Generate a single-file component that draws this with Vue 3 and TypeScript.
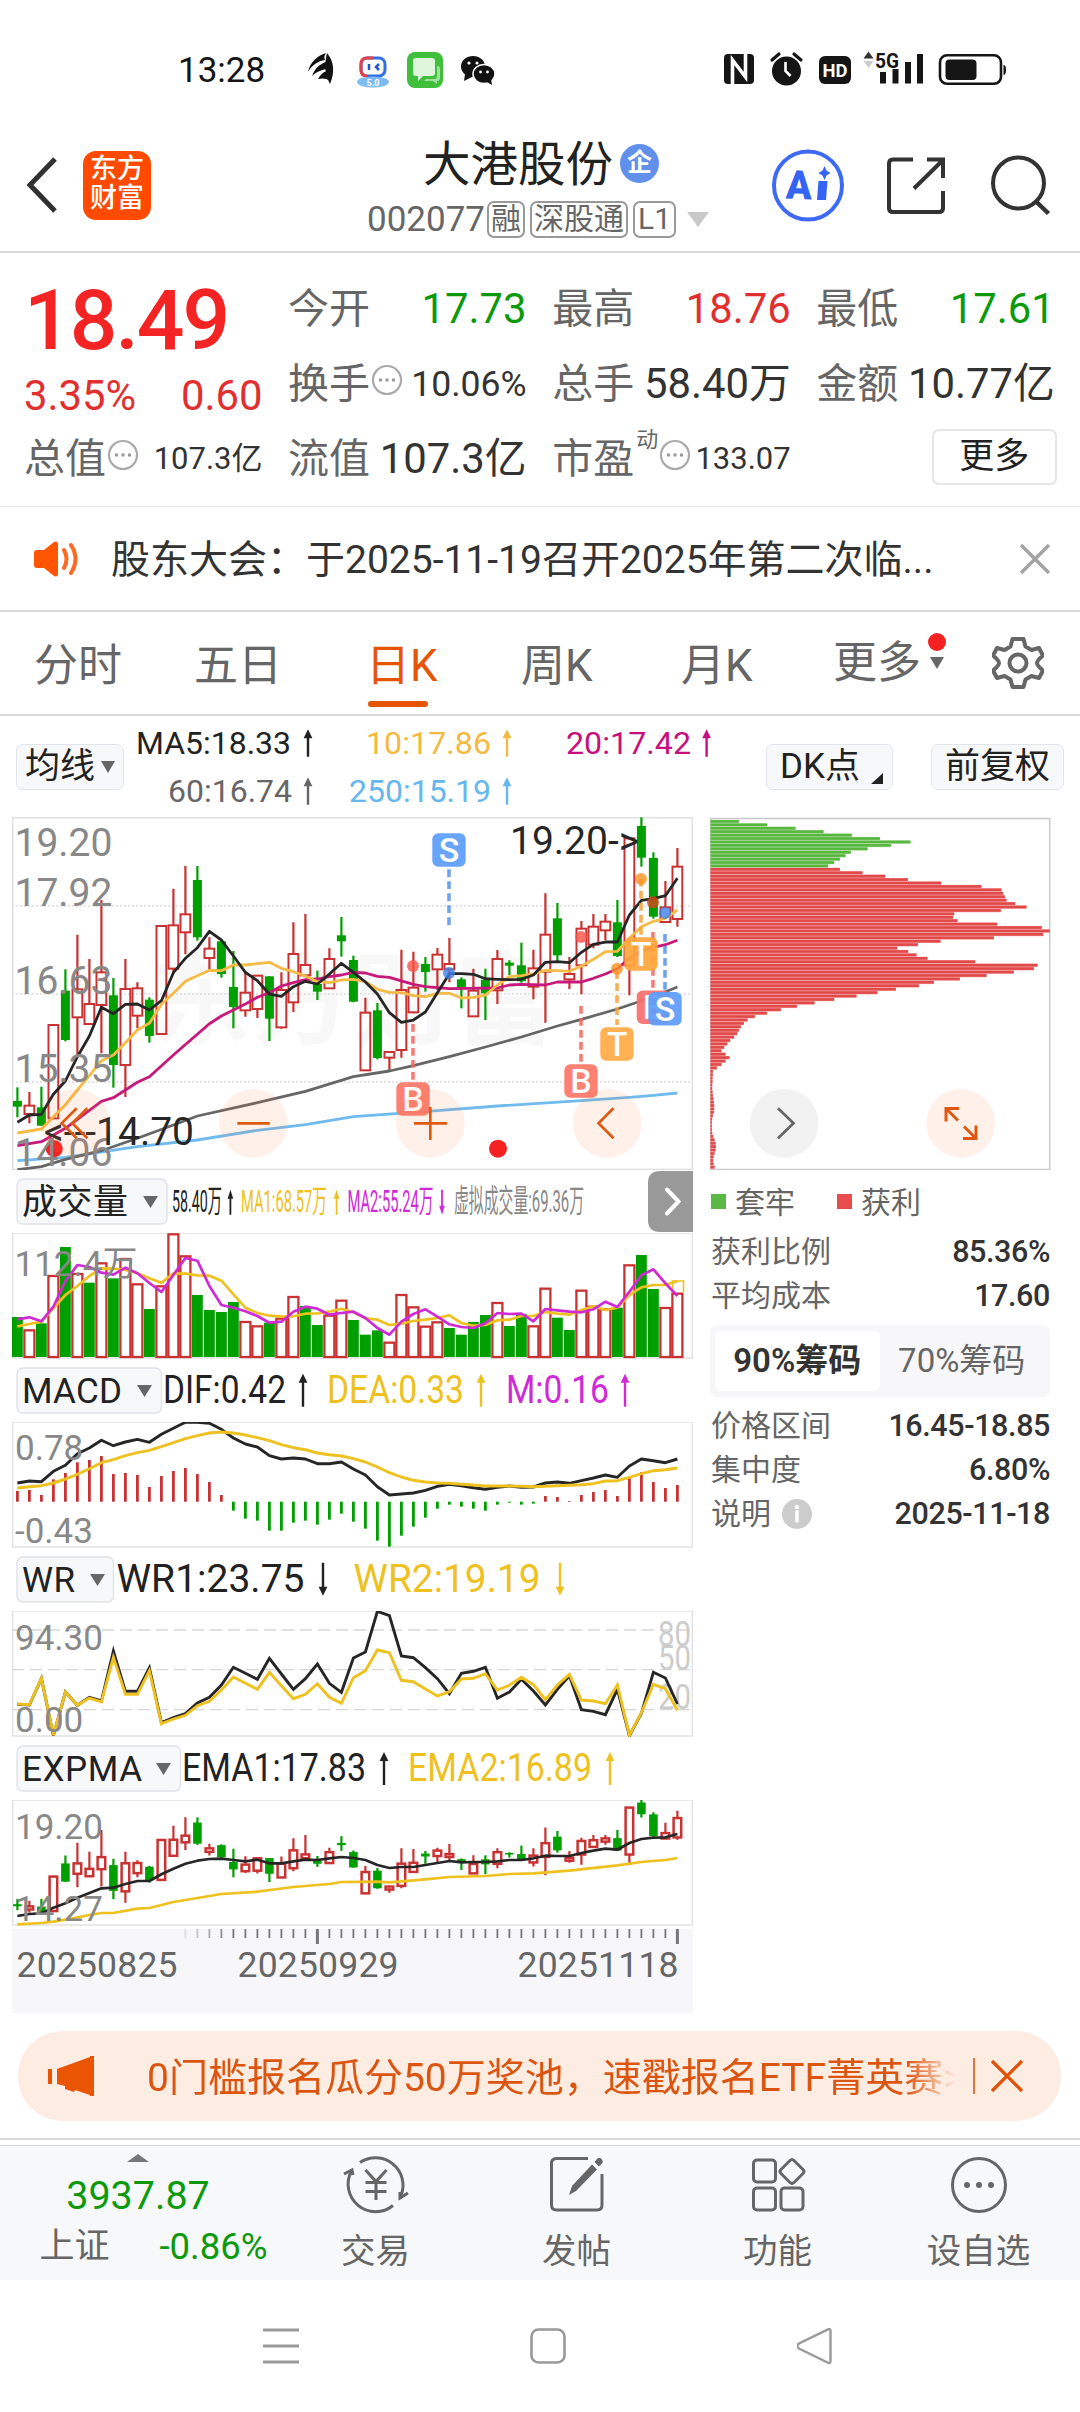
<script setup lang="ts">
type Candle = [number, number, number, number, number]

interface Label { text: string; x: number; w: number; color: string; arrow?: number; up?: boolean }
interface SubPanel {
  name: string
  btn: number
  nameW: number
  tri: number
  size: number
  base: number
  top: number
  labels: Label[]
}

const STEP = 12
const X0 = 17.4
const px = (i: number): number => X0 + STEP * i

const RED = '#c83232'
const GREEN = '#009f00'

// high, body top, body bottom, low, rising flag
const candles: Candle[] = [
  [832, 873, 890, 922, 0], [846, 887, 912, 940, 1], [830, 892, 947, 947, 0], [642, 645, 925, 928, 1],
  [478, 542, 690, 694, 0], [374, 538, 622, 735, 1], [447, 582, 642, 642, 1], [270, 487, 585, 730, 1],
  [504, 556, 765, 833, 0], [447, 537, 765, 861, 1], [517, 535, 617, 655, 1], [562, 569, 678, 698, 0],
  [348, 348, 672, 672, 1], [236, 346, 476, 490, 1], [168, 313, 367, 433, 1], [168, 210, 382, 392, 0],
  [382, 416, 444, 478, 1], [387, 394, 492, 503, 0], [423, 531, 591, 655, 0], [485, 548, 601, 620, 1],
  [497, 497, 597, 624, 1], [499, 499, 626, 693, 0], [487, 540, 652, 656, 1], [337, 432, 577, 606, 1],
  [312, 465, 496, 500, 1], [482, 522, 545, 570, 0], [415, 447, 535, 537, 1], [321, 376, 394, 440, 0],
  [437, 450, 575, 577, 0], [563, 608, 781, 783, 1], [579, 601, 744, 748, 0], [724, 726, 743, 781, 1],
  [419, 540, 720, 743, 1], [425, 533, 607, 610, 1], [441, 462, 486, 545, 0], [414, 434, 478, 540, 1],
  [384, 462, 478, 517, 1], [502, 508, 535, 595, 0], [476, 542, 619, 621, 1], [476, 509, 550, 630, 0],
  [420, 447, 541, 582, 1], [451, 458, 467, 495, 0], [398, 466, 514, 518, 0], [419, 475, 530, 568, 1],
  [250, 374, 485, 638, 1], [279, 325, 436, 455, 0], [441, 492, 508, 537, 1], [333, 356, 466, 553, 1],
  [312, 350, 404, 415, 1], [312, 335, 361, 391, 1], [270, 337, 438, 441, 0], [85, 85, 466, 556, 1],
  [22, 48, 143, 170, 0], [127, 144, 320, 326, 0], [213, 292, 336, 338, 1], [114, 170, 327, 350, 1],
]

const ma5 = [937, 915, 913, 853, 813, 740, 678, 592, 611, 583, 582, 600, 572, 488, 445, 413, 364, 390, 438, 487, 512, 552, 559, 530, 514, 522, 492, 460, 487, 516, 552, 608, 637, 630, 606, 548, 491, 491, 493, 506, 508, 509, 508, 495, 457, 455, 458, 427, 403, 396, 396, 315, 271, 266, 257, 205]
const ma10 = [969, 963, 957, 920, 884, 840, 797, 752, 735, 698, 660, 640, 583, 550, 514, 497, 481, 482, 465, 465, 461, 457, 475, 485, 498, 515, 518, 510, 508, 515, 538, 547, 548, 557, 560, 550, 550, 564, 562, 555, 525, 500, 497, 492, 481, 482, 484, 468, 448, 425, 424, 385, 350, 334, 325, 300]
const ma20: [number, number][] = [[0, 1007], [2, 995], [4, 955], [7, 874], [8, 863], [9, 840], [10, 817], [11, 800], [13, 735], [16, 641], [17, 618], [18, 600], [19, 582], [20, 562], [21, 548], [22, 528], [23, 518], [24, 509], [25, 507], [26, 500], [27, 495], [28, 487], [29, 489], [30, 499], [31, 502], [33, 523], [34, 530], [36, 536], [40, 534], [41, 525], [42, 523], [44, 525], [45, 516], [47, 516], [48, 505], [49, 492], [50, 476], [51, 445], [52, 424], [53, 412], [54, 404], [55, 391]]
const ma60: [number, number][] = [[0, 1079], [2, 1070], [4, 1048], [7, 1022], [10, 985], [13, 945], [15, 918], [20, 878], [24, 844], [28, 800], [31, 783], [33, 767], [36, 740], [39, 711], [42, 681], [45, 648], [47, 628], [50, 597], [53, 560], [55, 531]]
const ma250: [number, number][] = [[0, 1052], [4, 1042], [10, 1010], [15, 990], [20, 961], [24, 944], [28, 920], [35, 902], [40, 888], [47, 872], [51, 862], [53, 856], [55, 849]]

const volume = [441, 478, 460, 315, 231, 309, 338, 277, 325, 264, 340, 417, 346, 190, 256, 375, 420, 426, 396, 453, 466, 458, 443, 378, 408, 465, 434, 389, 450, 494, 481, 515, 372, 409, 467, 454, 474, 494, 456, 435, 396, 468, 432, 466, 353, 443, 480, 359, 407, 415, 413, 283, 255, 357, 411, 368]
const volumeUp = '01010101011011100001101100110001111100001001100111010011'
const volMa1 = [469, 462, 455, 415, 375, 348, 318, 295, 296, 300, 310, 325, 338, 310, 311, 316, 317, 332, 373, 413, 429, 437, 440, 439, 431, 430, 425, 416, 427, 445, 449, 465, 461, 453, 449, 444, 436, 459, 467, 465, 451, 449, 438, 438, 426, 431, 434, 420, 409, 420, 413, 375, 352, 345, 345, 333]
const volMa2 = [448, 442, 454, 410, 333, 285, 291, 308, 314, 293, 310, 339, 366, 315, 264, 272, 348, 405, 413, 424, 438, 458, 455, 425, 410, 416, 434, 429, 425, 444, 474, 494, 455, 432, 418, 440, 463, 471, 474, 460, 429, 432, 431, 454, 417, 421, 425, 427, 418, 395, 411, 365, 316, 298, 340, 378]

const macd = [363, 360, 375, 328, 309, 277, 270, 258, 312, 309, 315, 351, 318, 303, 294, 312, 336, 375, 422, 446, 452, 482, 482, 458, 452, 464, 449, 431, 455, 476, 512, 530, 497, 470, 443, 416, 404, 410, 416, 422, 404, 398, 404, 401, 378, 381, 393, 375, 366, 360, 378, 324, 306, 336, 354, 345]
const dif = [339, 333, 335, 304, 286, 251, 234, 211, 227, 216, 208, 217, 193, 175, 157, 157, 160, 178, 204, 222, 231, 257, 267, 264, 267, 281, 281, 276, 297, 315, 350, 375, 372, 369, 361, 349, 343, 347, 353, 358, 352, 348, 352, 351, 339, 336, 340, 332, 324, 315, 322, 288, 267, 272, 278, 267]
const dea = [354, 350, 347, 339, 327, 313, 296, 278, 269, 257, 248, 241, 230, 218, 206, 197, 189, 186, 189, 195, 203, 212, 224, 233, 239, 249, 254, 258, 266, 276, 291, 308, 321, 331, 336, 339, 340, 343, 345, 348, 348, 348, 349, 350, 349, 347, 346, 344, 341, 333, 332, 322, 311, 302, 299, 294]

const wr1 = [463, 465, 385, 557, 426, 466, 442, 453, 303, 424, 424, 353, 518, 503, 491, 459, 442, 405, 352, 370, 388, 325, 372, 418, 386, 342, 400, 427, 324, 306, 184, 197, 318, 323, 353, 386, 431, 370, 364, 352, 445, 426, 388, 423, 465, 418, 377, 479, 484, 494, 418, 557, 490, 367, 384, 462]
const wr2 = [462, 464, 385, 556, 426, 466, 444, 456, 322, 433, 433, 362, 521, 507, 496, 467, 454, 420, 381, 400, 418, 367, 407, 446, 433, 401, 442, 460, 383, 362, 300, 308, 391, 395, 417, 438, 425, 387, 385, 371, 420, 406, 382, 404, 449, 405, 373, 450, 453, 461, 405, 556, 488, 403, 416, 481]

const ema1 = [528, 522, 520, 503, 490, 473, 459, 445, 443, 432, 423, 423, 403, 386, 371, 362, 357, 356, 360, 364, 359, 370, 370, 364, 359, 360, 355, 351, 354, 360, 375, 384, 381, 381, 375, 369, 363, 367, 366, 366, 364, 360, 360, 355, 347, 348, 348, 339, 332, 326, 329, 309, 297, 293, 292, 282]
const ema2: [number, number][] = [[0, 553], [2, 549], [3, 545], [4, 539], [6, 525], [7, 519], [8, 519], [10, 506], [11, 504], [13, 486], [15, 474], [17, 462], [20, 455], [23, 441], [26, 432], [27, 426], [30, 425], [31, 427], [34, 418], [36, 411], [39, 408], [41, 402], [43, 400], [46, 392], [50, 376], [52, 366], [54, 360], [55, 354]]

const chips = [147, 232, 317, 401, 486, 570, 662, 603, 533, 483, 467, 450, 433, 415, 450, 518, 586, 654, 754, 875, 935, 940, 945, 950, 976, 1010, 933, 793, 790, 803, 922, 1056, 1080, 1060, 912, 752, 684, 622, 655, 680, 713, 856, 1043, 1032, 972, 890, 810, 732, 687, 618, 563, 500, 433, 374, 321, 273, 231, 195, 173, 162, 153, 147, 142, 133, 121, 112, 103, 95, 107, 119, 107, 95, 81, 69, 69, 68, 68, 67, 67, 68, 69, 71, 72, 73, 73, 72, 69, 67, 66, 66, 66, 67, 70, 74, 77, 78, 77, 74, 71, 70, 71, 74]

function dense(values: number[], base: number): string {
  return values.map((v, i) => `${px(i).toFixed(1)},${(base + v / 3).toFixed(1)}`).join(' ')
}
function sparse(values: [number, number][], base: number): string {
  return values.map(([i, v]) => `${px(i).toFixed(1)},${(base + v / 3).toFixed(1)}`).join(' ')
}
function arrow(x: number, top: number, bottom: number, up: boolean, head = 4.4, half = 1.2): string {
  const y0 = up ? top : bottom
  const y1 = up ? top + 9 : bottom - 9
  const y2 = up ? bottom : top
  return `M${x} ${y0}L${x + head} ${y1}H${x + half}V${y2}H${x - half}V${y1}H${x - head}Z`
}

const mainCandles = candles.map(([h, t, b, l, up], i) => ({
  x: px(i), h: 810 + h / 3, t: 810 + t / 3, b: 810 + b / 3, l: 810 + l / 3, up: up === 1,
}))
const emaY = (v: number): number => 1740 + (178 + (v - 22) * 0.3696) / 3
const emaCandles = candles.map(([h, t, b, l, up], i) => ({
  x: px(i), h: emaY(h), t: emaY(t), b: emaY(b), l: emaY(l), up: up === 1,
}))
const volBars = volume.map((v, i) => ({ x: px(i), y: 1170 + v / 3, up: volumeUp[i] === '1' }))
const ticks = Array.from({ length: 42 }, (_, k) => k + 14)

const stats = [
  { label: '今开', value: '17.73', cls: 'down' },
  { label: '最高', value: '18.76', cls: 'up' },
  { label: '最低', value: '17.61', cls: 'down' },
]
const axisLabels = [
  { t: '19.20', y: 855.7 }, { t: '17.92', y: 906 }, { t: '16.63', y: 994 }, { t: '15.35', y: 1082 }, { t: '14.06', y: 1165.7 },
]
const maLabels = [
  { t: 'MA5:18.33', x: 136, w: 155, a: 308, y: 754.3, c: '#222222' },
  { t: '10:17.86', x: 366, w: 125, a: 507, y: 754.3, c: '#f5b942' },
  { t: '20:17.42', x: 566, w: 125, a: 706.6, y: 754.3, c: '#c7107e' },
  { t: '60:16.74', x: 168, w: 124, a: 308, y: 802.3, c: '#666666' },
  { t: '250:15.19', x: 349, w: 142, a: 507, y: 802.3, c: '#66b7ee' },
]
const Y = '#eec11f'
const P = '#cf2ad6'
const panels: SubPanel[] = [
  { name: '成交量', btn: 150, nameW: 106, tri: 143, size: 31.5, base: 1211.7, top: 1170, labels: [
    { text: '58.40万', x: 172, w: 50, color: '#222', arrow: 230.4, up: true },
    { text: 'MA1:68.57万', x: 241, w: 86, color: Y, arrow: 336.6, up: true },
    { text: 'MA2:55.24万', x: 347.5, w: 86, color: P, arrow: 442, up: false },
    { text: '虚拟成交量:69.36万', x: 454, w: 130, color: '#888' } ] },
  { name: 'MACD', btn: 144.5, nameW: 100, tri: 137, size: 39, base: 1402.7, top: 1359, labels: [
    { text: 'DIF:0.42', x: 163, w: 123, color: '#222', arrow: 303, up: true },
    { text: 'DEA:0.33', x: 327, w: 137, color: Y, arrow: 481, up: true },
    { text: 'M:0.16', x: 506, w: 103, color: P, arrow: 625, up: true } ] },
  { name: 'WR', btn: 96.5, nameW: 53, tri: 90, size: 39, base: 1591.8, top: 1548, labels: [
    { text: 'WR1:23.75', x: 116.5, w: 188, color: '#222', arrow: 323, up: false },
    { text: 'WR2:19.19', x: 353.5, w: 187, color: Y, arrow: 560, up: false } ] },
  { name: 'EXPMA', btn: 163.5, nameW: 120, tri: 156, size: 39, base: 1781, top: 1737, labels: [
    { text: 'EMA1:17.83', x: 182, w: 184, color: '#222', arrow: 384, up: true },
    { text: 'EMA2:16.89', x: 408, w: 184, color: Y, arrow: 610, up: true } ] },
]

const tags = [
  { t: 'S', x: 432.3, y: 833.3, c: '#5c9efa' },
  { t: 'B', x: 396.3, y: 1082.3, c: '#fd7767' },
  { t: 'B', x: 564.3, y: 1064.3, c: '#fd7767' },
  { t: 'T', x: 600.3, y: 1027.3, c: '#ffab46' },
  { t: 'T', x: 624.3, y: 937.3, c: '#ffa63c' },
  { t: 'B', x: 636.7, y: 990.5, c: '#f7706c' },
  { t: 'S', x: 648.3, y: 992, c: '#5c9efa' },
]
const guides = [
  { x: 449, a: 869.3, b: 925, c: '#5794ee' },
  { x: 413, a: 1024, b: 1080, c: '#f4675c' },
  { x: 581, a: 1006, b: 1062, c: '#f4675c' },
  { x: 617, a: 971.3, b: 1025, c: '#f7a233' },
  { x: 641, a: 879, b: 935, c: '#f7a233' },
  { x: 653, a: 932, b: 988, c: '#f4675c' },
  { x: 665, a: 934, b: 990, c: '#5794ee' },
]
const dots = [
  { x: 449, y: 973, c: '#3f82ea' }, { x: 413, y: 966, c: '#fa5348' }, { x: 581, y: 937, c: '#fa5348' },
  { x: 617, y: 968.7, c: '#fb9420' }, { x: 641, y: 879, c: '#fb9420' }, { x: 653, y: 902.3, c: '#d4471c' }, { x: 665, y: 913, c: '#3f82ea' },
]
</script>

<template>
  <div class="page">
    <div class="status">
      <span class="clock">13:28</span>
      <svg class="sys-left" width="194" height="44" viewBox="304 48 194 44">
        <path d="M308 72c2-10 9-16 18-19-2 3-2 5-1 7-7 1-13 5-17 12zM312 76c3-8 8-12 14-14-1 3-1 5 0 7-5 1-10 3-14 7zM318 79c2-4 5-7 9-8 0 3 1 6 3 10-4-3-8-3-12-2zM327 53c7 8 8 19 3 31-5-9-6-19-3-31z" fill="#111" />
        <rect x="361" y="58" width="24" height="18" rx="6" fill="#fff" stroke="#2f6fe8" stroke-width="3" />
        <path d="M373 58h-6q-6 0-6 6v6q0 6 6 6" fill="none" stroke="#e2404a" stroke-width="3" />
        <path d="M369 64v6M379 64l-3 3 3 3" fill="none" stroke="#2456c8" stroke-width="2.500" />
        <ellipse cx="373" cy="82" rx="16" ry="5.500" fill="#7dbcf0" />
        <text x="373" y="86" font-size="9" font-weight="700" fill="#fff" text-anchor="middle">5.0</text>
        <rect x="407" y="52" width="36" height="36" rx="8" fill="#3fbf3b" />
        <path d="M416 58h16q3 0 3 3v12q0 3-3 3h-9l-5 5v-5h-2q-3 0-3-3V61q0-3 3-3z" fill="#dff6dc" />
        <path d="M437 66v10q0 3-3 3h-8l-2 2h9l4 3v-3q3 0 3-3V69q0-3-3-3z" fill="#9fe09b" />
        <ellipse cx="473" cy="66.500" rx="12" ry="10.500" fill="#111" /><path d="M465 74l-1 7 8-4z" fill="#111" />
        <ellipse cx="484" cy="74" rx="11" ry="9.500" fill="#111" stroke="#fff" stroke-width="1.500" /><path d="M487 82l5 3-1-6z" fill="#111" />
        <circle cx="469" cy="63" r="1.600" fill="#fff" /><circle cx="477" cy="63" r="1.600" fill="#fff" />
        <circle cx="480.500" cy="72" r="1.400" fill="#fff" /><circle cx="487.500" cy="72" r="1.400" fill="#fff" />
      </svg>
      <svg class="sys-right" width="290" height="44" viewBox="720 48 290 44">
        <rect x="724" y="54" width="30" height="30" rx="4" fill="#151515" />
        <path d="M732.500 84V60l13 17V54" fill="none" stroke="#fff" stroke-width="3.600" />
        <circle cx="786.500" cy="71" r="14.500" fill="#151515" /><path d="M772 60l7-6M801 60l-7-6" stroke="#151515" stroke-width="3.200" stroke-linecap="round" />
        <path d="M785.500 62v9l5 5" fill="none" stroke="#fff" stroke-width="2.600" />
        <rect x="819" y="56" width="32" height="28" rx="6" fill="#151515" />
        <text x="835" y="77" font-size="18.500" font-weight="700" fill="#fff" text-anchor="middle" textLength="25" lengthAdjust="spacingAndGlyphs">HD</text>
        <path d="M863.500 58.500l5-7 5 7z" fill="#333" /><path d="M863.500 61l5 7 5-7z" fill="#ccc" />
        <text x="875" y="67.500" font-size="20" font-weight="700" fill="#151515" textLength="24" lengthAdjust="spacingAndGlyphs">5G</text>
        <path d="M880 72h6v11.500h-6zM892.500 69h6v14.500h-6zM905 62h6v21.500h-6zM917 54h6v29.500h-6z" fill="#151515" />
        <rect x="940" y="55.300" width="61" height="28.500" rx="7" fill="none" stroke="#151515" stroke-width="2.600" />
        <rect x="945.500" y="59.500" width="31" height="20.500" rx="4" fill="#151515" /><path d="M1003.500 65q2.500 0 2.500 5t-2.500 5z" fill="#151515" />
      </svg>
    </div>

    <header class="head">
      <div class="head-left">
        <svg width="36" height="60" viewBox="0 0 36 60"><path d="M31 4L6 30l25 26" fill="none" stroke="#303030" stroke-width="5" /></svg>
        <div class="logo"><span>东方</span><span>财富</span></div>
      </div>
      <div class="head-mid">
        <div class="title"><span>大港股份</span><i>企</i></div>
        <div class="code">
          <span class="num">002077</span><b>融</b><b>深股通</b><b>L1</b>
          <svg width="22" height="15" viewBox="0 0 22 15"><path d="M0 0h22L11 15z" fill="#c9c9c9" /></svg>
        </div>
      </div>
      <svg class="head-right" width="290" height="80" viewBox="768 145 290 80">
        <circle cx="808" cy="185.500" r="34" fill="none" stroke="#3c6af5" stroke-width="4" />
        <text x="786" y="199" font-size="40" font-weight="900" fill="#3563f2" textLength="26" lengthAdjust="spacingAndGlyphs" transform="rotate(2 799 185)">A</text>
        <path d="M818.500 181h9l-1.500 19h-9zM824.500 166l2 4.500 4 2.500-4 2.500-2 4.500-2-4.500-4-2.500 4-2.500z" fill="#3563f2" />
        <path d="M913 159.500h-20q-4 0-4 4v44.500q0 4 4 4h46q4 0 4-4V191M927 159.500h16V178M943 160l-29 28.500" fill="none" stroke="#333" stroke-width="4" />
        <circle cx="1018.500" cy="183" r="25.500" fill="none" stroke="#333" stroke-width="4" /><path d="M1036 201.500l12.500 12" stroke="#333" stroke-width="4.500" />
      </svg>
    </header>

    <section class="quote">
      <div class="q price">18.49</div>
      <div v-for="s in stats" :key="s.label" class="q"><em>{{ s.label }}</em><strong :class="s.cls">{{ s.value }}</strong></div>

      <div class="q low up"><strong>3.35%</strong><strong>0.60</strong></div>
      <div class="q"><em>换手<svg class="more-dot" width="32" height="32" viewBox="0 0 32 32"><circle cx="16" cy="16" r="14" /><path d="M8 14.500h3v3H8zM14.500 14.500h3v3h-3zM21 14.500h3v3h-3z" /></svg></em><strong class="mid">10.06%</strong></div>
      <div class="q"><em>总手</em><strong>58.40万</strong></div>
      <div class="q"><em>金额</em><strong>10.77亿</strong></div>

      <div class="q"><em>总值<svg class="more-dot" width="32" height="32" viewBox="0 0 32 32"><circle cx="16" cy="16" r="14" /><path d="M8 14.500h3v3H8zM14.500 14.500h3v3h-3zM21 14.500h3v3h-3z" /></svg></em><strong class="small">107.3亿</strong></div>
      <div class="q"><em>流值</em><strong>107.3亿</strong></div>
      <div class="q"><em>市盈<sup>动</sup><svg class="more-dot" width="32" height="32" viewBox="0 0 32 32"><circle cx="16" cy="16" r="14" /><path d="M8 14.500h3v3H8zM14.500 14.500h3v3h-3zM21 14.500h3v3h-3z" /></svg></em><strong class="small">133.07</strong></div>
      <div class="q end"><button class="more">更多</button></div>
    </section>

    <section class="notice">
      <svg width="46" height="38" viewBox="0 0 46 38"><path d="M3 10h7L20 2q4-2 4 3v28q0 5-4 3l-10-8H3q-3 0-3-3V13q0-3 3-3z" fill="#ff5500" /><path d="M30 10q5 9 0 18M37 5q9 14 0 28" fill="none" stroke="#ff6a20" stroke-width="4" stroke-linecap="round" /></svg>
      <p>股东大会：于2025-11-19召开2025年第二次临...</p>
      <svg width="30" height="30" viewBox="0 0 30 30"><path d="M1 1l28 28M29 1L1 29" stroke="#a3a3a3" stroke-width="3.500" /></svg>
    </section>

    <nav class="tabs">
      <span>分时</span><span>五日</span><span class="on">日K</span><span>周K</span><span>月K</span>
      <span class="tab-more">更多<i></i><svg width="14" height="12" viewBox="0 0 14 12"><path d="M0 0h14L7 12z" fill="#666" /></svg></span>
      <svg width="52" height="54" viewBox="0 0 52 54"><path d="M20.500 3h11l2 7.500 6 3.500 7.500-2 4 7.500q-6 5-6 7.500t6 7.500l-4 7.500-7.500-2-6 3.500-2 7.500h-11l-2-7.500-6-3.500-7.500 2-4-7.500q6-5 6-7.500t-6-7.500l4-7.500 7.500 2 6-3.500z" fill="none" stroke="#666" stroke-width="4" stroke-linejoin="round" /><circle cx="26" cy="27" r="8.500" fill="none" stroke="#666" stroke-width="4" /></svg>
    </nav>

    <section class="tools">
      <button class="pill ma">均线<svg width="14" height="12" viewBox="0 0 14 12"><path d="M0 0h14L7 12z" fill="#666" /></svg></button>
      <svg width="642" height="101" viewBox="124 716 642 101">
        <g v-for="m in maLabels" :key="m.t" :fill="m.c">
          <text :x="m.x" :y="m.y" font-size="32" :textLength="m.w" lengthAdjust="spacingAndGlyphs">{{ m.t }}</text>
          <path :d="arrow(m.a, m.y - 25, m.y + 2.500, true)" />
        </g>
      </svg>
      <button class="pill dk">DK点<svg width="12" height="11" viewBox="0 0 12 11"><path d="M12 0v11H0z" fill="#222" /></svg></button>
      <button class="pill fq">前复权</button>
    </section>

    <main class="body">
      <div class="charts">
        <svg class="block" width="681" height="353" viewBox="12 817 681 353">
          <text x="150" y="1036" font-size="100" font-weight="700" fill="#f8f8f8" textLength="405">东方财富</text>
          <path d="M12 906h681M12 994h681M12 1082h681" stroke="#dcdcdc" stroke-width="1.500" stroke-dasharray="2 2" />
          <rect x="12.700" y="817.800" width="679.600" height="351.600" fill="none" stroke="#e0e0e0" stroke-width="1.500" />
          <g v-for="(c, i) in mainCandles" :key="i">
            <template v-if="c.up">
              <path :d="`M${c.x} ${c.h}V${c.t}M${c.x} ${c.b}V${c.l}`" :stroke="RED" stroke-width="2.200" />
              <rect :x="c.x - 4.900" :y="c.t" width="9.800" :height="Math.max(2, c.b - c.t)" fill="none" :stroke="RED" stroke-width="2" />
            </template>
            <template v-else>
              <path :d="`M${c.x} ${c.h}V${c.l}`" :stroke="GREEN" stroke-width="2.200" />
              <rect :x="c.x - 4.500" :y="c.t" width="9" :height="c.b - c.t" :fill="GREEN" />
            </template>
          </g>
          <g fill="none" stroke-width="2.800" stroke-linejoin="round">
            <polyline :points="sparse(ma250, 810)" stroke="#6fbbee" />
            <polyline :points="sparse(ma60, 810)" stroke="#666" />
            <polyline :points="sparse(ma20, 810)" stroke="#c7187c" />
            <polyline :points="dense(ma10, 810)" stroke="#f5bb45" />
            <polyline :points="dense(ma5, 810)" stroke="#262626" />
          </g>
          <circle cx="54.300" cy="1148.700" r="8.500" fill="#f42222" /><circle cx="498" cy="1148.700" r="9" fill="#f42222" />
          <text v-for="a in axisLabels" :key="a.t" x="14.500" :y="a.y" font-size="39" fill="#888">{{ a.t }}</text>
          <text x="44" y="1144.700" font-size="39" fill="#262626" textLength="150">&lt;---14.70</text>
          <text x="510" y="854" font-size="39" fill="#262626">19.20-&gt;</text>
          <path v-for="g in guides" :key="g.x" :d="`M${g.x} ${g.a}V${g.b}`" :stroke="g.c" stroke-width="3.600" stroke-dasharray="7.800 4.200" opacity=".85" />
          <circle v-for="d in dots" :key="d.x" :cx="d.x" :cy="d.y" r="6" :fill="d.c" opacity=".8" />
          <g v-for="(t, i) in tags" :key="i">
            <rect :x="t.x" :y="t.y" width="33.400" height="33.400" rx="6" :fill="t.c" opacity=".93" />
            <text :x="t.x + 16.700" :y="t.y + 28.700" font-size="34" font-weight="500" fill="#fff" text-anchor="middle">{{ t.t }}</text>
          </g>
          <g fill="#fb7a33" fill-opacity=".11">
            <circle cx="75.700" cy="1123.300" r="34.400" /><circle cx="253.300" cy="1123.300" r="34.400" />
            <circle cx="430.300" cy="1123.300" r="34.400" /><circle cx="607.300" cy="1123.300" r="34.400" />
          </g>
          <path d="M76.700 1108.300l-15 15 15 15M87.300 1108.300l-15 15 15 15M237.300 1123.300h32.500M414 1123.300h33M430.300 1107v33M613.500 1108.300l-15 15 15 15" fill="none" stroke="#dc5a12" stroke-width="2.700" />
        </svg>

        <div v-for="(p, k) in panels" :key="p.name" class="panel">
          <svg class="block" width="681" height="63" :viewBox="`12 ${p.top} 681 63`">
            <rect x="17" :y="p.top + 9" :width="p.btn" height="45" rx="6" fill="#f7f8fa" stroke="#dfe1e8" stroke-width="1.300" />
            <text x="22" :y="k === 0 ? 1214 : p.base" font-size="35" :textLength="p.nameW" fill="#222">{{ p.name }}</text>
            <path :d="`M${p.tri} ${p.top + 26}h15l-7.500 12z`" fill="#666" />
            <g v-for="l in p.labels" :key="l.text" :fill="l.color">
              <text :x="l.x" :y="p.base" :font-size="p.size" :textLength="l.w" lengthAdjust="spacingAndGlyphs">{{ l.text }}</text>
              <path v-if="l.arrow" :d="k === 0 ? arrow(l.arrow, p.base - 22, p.base + 3, !!l.up, 2.800, .9) : arrow(l.arrow, p.base - 29, p.base + 4, !!l.up)" />
            </g>
            <g v-if="k === 0">
              <path d="M693 1171h-33q-12 0-12 12v37q0 12 12 12h33z" fill="#999" />
              <path d="M667 1189.500l11.500 12-11.500 12" fill="none" stroke="#fff" stroke-width="4" stroke-linecap="round" />
            </g>
          </svg>
          <svg class="block" width="681" height="126" :viewBox="`12 ${p.top + 63} 681 126`">
            <rect x="12.700" :y="p.top + 63" width="679.600" height="125" fill="#fff" stroke="#e2e2e2" stroke-width="1.500" />
            <template v-if="k === 0">
              <template v-for="(b, i) in volBars" :key="i">
                <rect v-if="b.up" :x="b.x - 5" :y="b.y + 1" width="10" :height="1356 - b.y" fill="#fff" :stroke="RED" stroke-width="2.300" />
                <rect v-else :x="b.x - 5.400" :y="b.y" width="10.800" :height="1357 - b.y" :fill="GREEN" />
              </template>
              <path d="M672.500 1292V1281h11V1292" fill="none" :stroke="Y" stroke-width="1.600" />
              <g fill="none" stroke-width="2.700" stroke-linejoin="round">
                <polyline :points="dense(volMa1, 1170)" :stroke="Y" />
                <polyline :points="dense(volMa2, 1170)" :stroke="P" />
              </g>
              <text class="axis" x="14.500" y="1276">112.4万</text>
            </template>
            <template v-else-if="k === 1">
              <path v-for="(m, i) in macd" :key="i" :d="`M${px(i)} 1501.700V${1370 + m / 3}`" :stroke="m < 395 ? RED : GREEN" stroke-width="2.800" />
              <g fill="none" stroke-width="2.900" stroke-linejoin="round">
                <polyline :points="dense(dif, 1370)" stroke="#262626" /><polyline :points="dense(dea, 1370)" :stroke="Y" />
              </g>
              <text class="axis" x="15" y="1460.300">0.78</text><text class="axis" x="15" y="1542.500">-0.43</text>
            </template>
            <template v-else-if="k === 2">
              <path d="M12 1630h681M12 1669.700h681M12 1709.700h681" stroke="#d6d6d6" stroke-width="1.300" stroke-dasharray="12 6" />
              <g fill="#ccc" font-size="35" text-anchor="end">
                <text x="691" y="1645.700" textLength="33" lengthAdjust="spacingAndGlyphs">80</text><text x="691" y="1670" textLength="33" lengthAdjust="spacingAndGlyphs">50</text><text x="691" y="1709" textLength="33" lengthAdjust="spacingAndGlyphs">20</text>
              </g>
              <g fill="none" stroke-width="2.900">
                <polyline :points="dense(wr1, 1550)" stroke="#262626" /><polyline :points="dense(wr2, 1550)" :stroke="Y" />
              </g>
              <text class="axis" x="15" y="1649.700">94.30</text><text class="axis" x="15" y="1731.700">0.00</text>
            </template>
            <template v-else>
              <g v-for="(c, i) in emaCandles" :key="i">
                <template v-if="c.up">
                  <path :d="`M${c.x} ${c.h}V${c.t}M${c.x} ${c.b}V${c.l}`" :stroke="RED" stroke-width="2.200" />
                  <rect :x="c.x - 3.800" :y="c.t + .5" width="7.600" :height="Math.max(3, c.b - c.t)" fill="none" :stroke="RED" stroke-width="2.500" />
                </template>
                <template v-else>
                  <path :d="`M${c.x} ${c.h}V${c.l}`" :stroke="GREEN" stroke-width="2.200" />
                  <rect :x="c.x - 4.300" :y="c.t" width="8.600" :height="Math.max(1.500, c.b - c.t)" :fill="GREEN" />
                </template>
              </g>
              <g fill="none" stroke-width="2.700" stroke-linejoin="round">
                <polyline :points="sparse(ema2, 1740)" :stroke="Y" /><polyline :points="dense(ema1, 1740)" stroke="#262626" />
              </g>
              <text class="axis" x="15" y="1838.700">19.20</text><text class="axis" x="15" y="1920.700">14.27</text>
            </template>
          </svg>
        </div>

        <svg class="block timeline" width="681" height="84" viewBox="12 1929 681 84">
          <rect x="12" y="1929" width="681" height="84" fill="#f7f7fa" />
          <path v-for="t in ticks" :key="t" :d="`M${px(t)} 1929v${t === 25 || t === 55 ? 15 : 9}`" stroke="#777" :stroke-width="t === 25 || t === 55 ? 3 : 1.800" :opacity="t < 18 ? (t - 13) * .2 : 1" />
          <g font-size="35.500" fill="#666"><text x="16.500" y="1976.700" textLength="161">20250825</text><text x="237.500" y="1976.700" textLength="161">20250929</text><text x="517.500" y="1976.700" textLength="161">20251118</text></g>
        </svg>
      </div>

      <aside class="chip">
        <svg class="block" width="341" height="353" viewBox="710.500 817 341 353">
          <rect x="711.200" y="818.500" width="339" height="351" fill="none" stroke="#c9c9c9" stroke-width="1.500" />
          <template v-for="(c, i) in chips" :key="i">
            <rect x="711" :y="819.800 + i * 3.423" :width="(c - 62) / 3" height="3.423" :fill="i < 14 ? '#a5dd96' : '#f79a9a'" />
            <rect x="711" :y="820.100 + i * 3.423" :width="(c - 62) / 3" height="2.600" :fill="i < 14 ? '#58b641' : '#e14a4a'" />
          </template>
          <circle cx="784.700" cy="1123.300" r="34.400" fill="#f2f2f2" /><path d="M778.500 1108.300l15.500 15-15.500 15" fill="none" stroke="#666" stroke-width="2.700" />
          <circle cx="961.300" cy="1123.300" r="34.400" fill="#fff1ea" />
          <path d="M946.500 1121.500V1108.500h13M946.500 1108.500l12 12M976.500 1125.500V1138.500h-13M976.500 1138.500l-12-12" fill="none" stroke="#e0590e" stroke-width="3" />
        </svg>
        <div class="legend"><i class="g"></i><span>套牢</span><i class="r"></i><span>获利</span></div>
        <div class="row"><span>获利比例</span><b>85.36%</b></div>
        <div class="row"><span>平均成本</span><b>17.60</b></div>
        <div class="seg"><span class="active">90%筹码</span><span>70%筹码</span></div>
        <div class="row"><span>价格区间</span><b>16.45-18.85</b></div>
        <div class="row"><span>集中度</span><b>6.80%</b></div>
        <div class="row"><span>说明<svg width="30" height="30" viewBox="0 0 30 30"><circle cx="15" cy="15" r="15" fill="#ccc" /><circle cx="15" cy="8" r="2.200" fill="#fff" /><path d="M15 12.500v9.500" stroke="#fff" stroke-width="3.500" stroke-linecap="round" /></svg></span><b>2025-11-18</b></div>
      </aside>
    </main>

    <section class="banner">
      <svg width="46" height="40" viewBox="0 0 46 40"><path d="M0 13h4v15H0zM9 13L42 1v-1h4v40h-4v-1L27 34l-1 2-9-3v-3l-8-2z" fill="#ea5504" /></svg>
      <p>0门槛报名瓜分50万奖池，速戳报名ETF菁英赛&gt;&gt;</p>
      <i></i>
      <svg width="34" height="34" viewBox="0 0 34 34"><path d="M2 2l30 30M32 2L2 32" stroke="#e05206" stroke-width="3.300" /></svg>
    </section>

    <footer class="dock">
      <div class="market">
        <svg width="22" height="8" viewBox="0 0 22 8"><path d="M11 0l11 8H0z" fill="#777" /></svg>
        <strong>3937.87</strong>
        <div><span>上证</span><b>-0.86%</b></div>
      </div>
      <div class="item">
        <svg width="66" height="60" viewBox="0 0 66 60"><g fill="none" stroke="#666" stroke-width="3"><path d="M17 8.500A27.500 27.500 0 0 1 58 41.500M50 51.500A27.500 27.500 0 0 1 8.500 17M1 20l8-4 1 5M65 39l-8 5v-6M22.500 16L33 27.500 43.500 16M33 27.500V46M22.500 28.500h21M22.500 37.500h21" /></g></svg>
        <span>交易</span>
      </div>
      <div class="item">
        <svg width="60" height="60" viewBox="0 0 60 60"><path d="M41 4.500H9.500q-5 0-5 5V51q0 5 5 5H50q5 0 5-5V20" fill="none" stroke="#666" stroke-width="3" /><path d="M22 41l3-9 20-21.500 5 5L29 37z" fill="#666" /><path d="M47.500 8l3-3.500q2-1.500 4 .5t1 4L52 12.500z" fill="#666" /></svg>
        <span>发帖</span>
      </div>
      <div class="item">
        <svg width="60" height="60" viewBox="0 0 60 60"><g fill="none" stroke="#666" stroke-width="3"><rect x="5.500" y="6" width="22" height="22" rx="3.500" /><rect x="5.500" y="34" width="22" height="22" rx="3.500" /><rect x="33" y="34" width="22" height="22" rx="3.500" /><path d="M42 6.500q2-2 4 0l9 9q2 2 0 4l-9 9q-2 2-4 0l-9-9q-2-2 0-4z" /></g></svg>
        <span>功能</span>
      </div>
      <div class="item">
        <svg width="60" height="60" viewBox="0 0 60 60"><circle cx="30" cy="31" r="26.500" fill="none" stroke="#666" stroke-width="3" /><g fill="#666"><circle cx="18" cy="31" r="3" /><circle cx="30" cy="31" r="3" /><circle cx="42" cy="31" r="3" /></g></svg>
        <span>设自选</span>
      </div>
    </footer>

    <div class="sysnav">
      <svg width="36" height="36" viewBox="0 0 36 36"><path d="M0 2h36M0 18h36M0 34h36" stroke="#999" stroke-width="3" /></svg>
      <svg width="36" height="36" viewBox="0 0 36 36"><rect x="1.500" y="1.500" width="33" height="33" rx="7" fill="none" stroke="#999" stroke-width="2.600" /></svg>
      <svg width="36" height="36" viewBox="0 0 36 36"><path d="M30 1.800Q33.500 0 33.500 3v30q0 3-3.500 1.200L2 20.500q-3.500-2.500 0-5z" fill="none" stroke="#999" stroke-width="2.400" /></svg>
    </div>
  </div>
</template>

<style>
body { background: #fff; }
</style>

<style scoped>
.page { width: 1080px; height: 2412px; overflow: hidden; background: #fff; color: #333; font-family: Roboto, "Noto Sans CJK SC", sans-serif; }
.page * { box-sizing: border-box; }
svg { flex: none; font-family: Roboto, "Noto Sans CJK SC", sans-serif; }
i, em { font-style: normal; }
p { margin: 0; white-space: nowrap; }
button { font: inherit; padding: 0; margin: 0; color: #222; }
.block { display: block; }

.status { height: 103px; padding: 37px 0 0 178px; display: flex; align-items: center; }
.clock { width: 126px; font-size: 35px; color: #151515; }
.sys-right { margin-left: 222px; }

.head { height: 150px; padding-top: 16px; display: flex; align-items: center; border-bottom: 2px solid #d9d9d9; }
.head-left { width: 369px; padding-left: 24px; display: flex; align-items: center; }
.logo { margin-left: 23px; width: 68px; height: 69px; padding-bottom: 2px; border-radius: 13px; background: #ff4a00; color: #fff; font-weight: 500; font-size: 27px; line-height: 29px; display: flex; flex-direction: column; align-items: center; justify-content: center; }
.head-mid { width: 340px; margin-top: 12px; white-space: nowrap; }
.title { height: 56px; padding-left: 54px; display: flex; align-items: center; font-size: 47.500px; line-height: 56px; color: #222; }
.title span { padding-top: 3px; }
.title i { margin-left: 7px; width: 39px; height: 39px; border-radius: 50%; background: #6090ea; color: #fff; font-size: 25px; font-weight: 700; line-height: 38px; text-align: center; }
.code { height: 56px; display: flex; align-items: center; color: #666; }
.code .num { width: 123px; margin-left: -2px; padding-top: 1px; font-size: 35px; }
.code b { height: 37px; margin-right: 5px; padding: 0 2px; border: 2px solid #999; border-radius: 7px; font-weight: 400; font-size: 30px; line-height: 32px; }
.code b:nth-of-type(3) { padding: 0 3px; }
.code svg { margin-left: 6px; }
.head-right { margin-left: 59px; }

.quote { height: 254px; padding: 18px 25px 0 24px; display: grid; grid-template-columns: repeat(4, 238.500px); grid-auto-rows: 75px; column-gap: 25.600px; border-bottom: 1px solid #e6e6e6; }
.q { display: flex; align-items: center; justify-content: space-between; white-space: nowrap; line-height: 60px; }
.q em { display: flex; align-items: center; font-size: 41px; color: #666; }
.q strong { font-weight: 400; font-size: 41.800px; }
.q strong.mid { font-size: 35.600px; }
.q strong.small { font-size: 31px; }
.q.price { padding-top: 24px; font-size: 84px; letter-spacing: -2px; font-weight: 500; color: #f42424; }
.q.low { padding-top: 24px; }
.q sup { font-size: 22px; line-height: 24px; margin: 0 0 38px 2px; }
.q.end { justify-content: flex-end; }
.more-dot { margin: -8px 0 0 1px; fill: #999; }
.more-dot circle { fill: none; stroke: #aaa; stroke-width: 2.200; }
.up, .q strong.up { color: #e12f2f; }
.q strong.down { color: #0c9a0c; }
.more { width: 125px; height: 56px; margin: -4px -2px 0 0; background: #fff; border: 2px solid #e6e6e6; border-radius: 7px; font-size: 35px; line-height: 50px; }

.notice { height: 105px; padding: 0 30px 0 34px; display: flex; align-items: center; border-bottom: 2px solid #dadada; }
.notice p { flex: 1; margin: -5px 0 0 31px; font-size: 39px; color: #333; }

.tabs { height: 104px; padding-left: 34px; display: grid; grid-template-columns: 160px 172px 155px 160px 152px 159px auto; align-items: center; border-bottom: 2px solid #dadada; font-size: 44px; color: #666; }
.tabs span { height: 102px; line-height: 108px; white-space: nowrap; }
.tabs .on { position: relative; color: #e65506; }
.tabs .on::after { content: ""; position: absolute; left: 2px; top: 89px; width: 60px; height: 6px; border-radius: 3px; background: #e65506; }
.tab-more { position: relative; display: flex; align-items: center; }
.tab-more i { position: absolute; left: 95px; top: 21px; width: 18px; height: 18px; border-radius: 50%; background: #f42222; }
.tab-more svg { margin-left: 9px; }

.tools { height: 101px; padding-left: 16px; display: flex; align-items: center; }
.pill { height: 46px; flex: none; margin-top: 1px; background: #f7f8fa; border: 1.500px solid #e2e4ec; border-radius: 7px; font-size: 35px; line-height: 42px; white-space: nowrap; display: flex; align-items: center; }
.ma { width: 108px; padding-left: 8px; }
.ma svg { margin-left: 6px; }
.dk { width: 127px; padding-left: 13px; }
.dk svg { margin: 22px 0 0 11px; }
.fq { width: 133px; margin-left: 38px; justify-content: center; }

.body { height: 1196px; padding-left: 12px; display: flex; }
.charts { width: 681px; }
.panel { height: 189px; }
.axis { font-size: 35px; fill: #888; }
.timeline { margin-top: 3px; }
.chip { width: 341px; margin-left: 17px; color: #666; font-size: 30px; }
.legend { height: 57px; display: flex; align-items: center; margin: 3px 0 0 1px; }
.legend i { width: 15px; height: 15px; margin-right: 9px; background: #5cb845; }
.legend i.r { background: #e84c4c; }
.legend span { width: 102px; margin-top: -3px; }
.row { height: 44px; line-height: 44px; padding: 0 1px 0 1px; display: flex; justify-content: space-between; white-space: nowrap; }
.row span { display: flex; align-items: center; }
.row svg { margin-left: 11px; }
.row b { font-weight: 500; font-size: 30.500px; letter-spacing: -.4px; color: #333; }
.seg { margin: 7px 1px 7px 0; height: 72px; padding: 6px; display: flex; background: #f7f7f9; border-radius: 7px; font-size: 33px; line-height: 59px; text-align: center; }
.seg span { flex: 1; }
.seg .active { margin-left: -1px; background: #fff; border-radius: 6px; color: #333; font-weight: 600; }

.banner { width: 1043px; height: 90px; margin: 18px 0 17px 18px; padding: 0 37px 0 30px; display: flex; align-items: center; border-radius: 45px; background: #fcece2; color: #dc5510; }
.banner p { width: 810px; margin: -5px 0 0 53px; overflow: hidden; font-size: 39px; -webkit-mask-image: linear-gradient(90deg, #000 94%, transparent); mask-image: linear-gradient(90deg, #000 94%, transparent); }
.banner i { width: 2px; height: 36px; margin: 0 15px 0 18px; background: #e0763c; }

.dock { height: 142px; border-top: 2px solid #d9dade; display: flex; background: linear-gradient(#fff 5px, #d5d6da 5px, #d5d6da 6px, #f7f8fa 6px); }
.market { width: 275px; padding-top: 14px; display: flex; flex-direction: column; align-items: center; }
.market strong { margin: 9px 0 0 1px; font-weight: 400; font-size: 39.500px; line-height: 50px; color: #0c9a0c; }
.market div { width: 228px; margin-left: 32px; margin-top: 1px; display: flex; justify-content: space-between; font-size: 35px; line-height: 50px; color: #666; }
.market b { font-weight: 400; font-size: 36.500px; color: #0c9a0c; }
.item { width: 201px; padding-top: 14px; display: flex; flex-direction: column; align-items: center; color: #666; font-size: 34.500px; line-height: 50px; }
.item span { margin-top: 12px; }

.sysnav { height: 132px; padding-left: 263px; display: flex; align-items: center; gap: 231px; }
</style>
